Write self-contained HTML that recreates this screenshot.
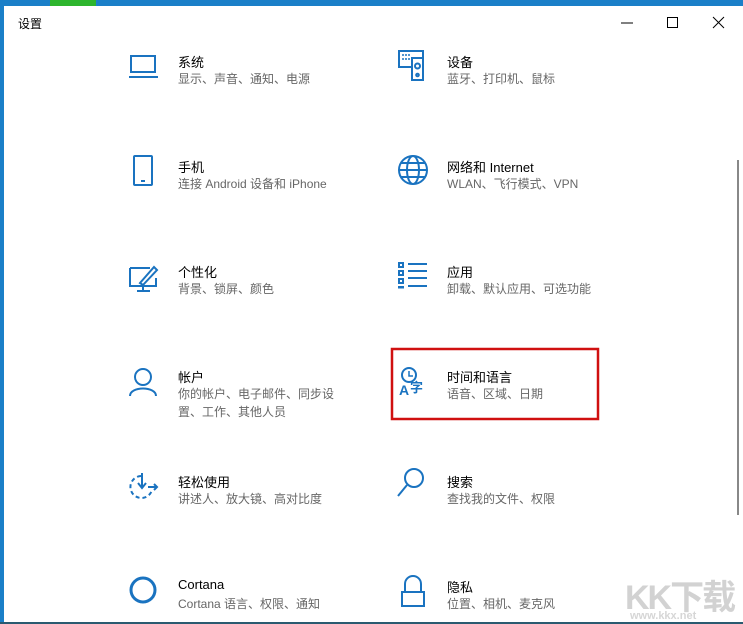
<!DOCTYPE html>
<html><head><meta charset="utf-8"><style>
body{margin:0;width:743px;height:624px;overflow:hidden;background:#1a7fc8;position:relative;font-family:"Liberation Sans","Noto Sans CJK SC",sans-serif}
.win{position:absolute;left:4px;top:6px;width:739px;height:616px;background:#fff}
.bot{position:absolute;left:0;top:622px;width:743px;height:2px;background:#2a5a70}
.t{position:absolute;font-size:13px;color:#000;white-space:nowrap}
.s{position:absolute;font-size:12px;color:#666;white-space:nowrap;line-height:18px}
svg{position:absolute}
.ic{fill:none;stroke:#1a73c0;stroke-width:2}
</style></head><body>
<div style="position:absolute;left:50px;top:0;width:46px;height:6px;background:#2db52d"></div>
<div class="win"></div>
<div class="bot"></div>
<div class="t" style="left:18px;top:15px;font-size:12px">设置</div>
<svg width="743" height="40" style="left:0;top:0">
<line x1="621" y1="23" x2="633" y2="23" stroke="#000" stroke-width="1"/>
<rect x="667.5" y="17.5" width="10" height="10" fill="none" stroke="#000"/>
<path d="M713 17L724 28M724 17L713 28" stroke="#000" stroke-width="1"/>
</svg>
<div style="position:absolute;left:737px;top:160px;width:2px;height:355px;background:#888"></div>

<svg width="743" height="624" style="left:0;top:0">
<g class="ic">
<rect x="131" y="56" width="24" height="16"/><path d="M129 77H158"/>
<rect x="399" y="51" width="24" height="16"/><rect x="412" y="58" width="11" height="22" fill="#fff"/><circle cx="417.5" cy="66" r="2.5"/><circle cx="417.5" cy="75" r="1.3"/>
<path d="M402 55h2M405 55h2M408 55h2M402 59h2M405 59h2M408 59h2" stroke-width="1.5"/>
<rect x="134" y="156" width="18" height="29" rx="1"/><path d="M141 181h4"/>
<circle cx="413" cy="170" r="14"/><ellipse cx="413" cy="170" rx="6" ry="14"/><path d="M399 170H427M401 163H425M401 177H425"/>
<path d="M130 268H150M130 268V286H156V278"/><path d="M143 290V286M137 291H150"/><path d="M140 283L154 267L157 270L143 285Z"/>
<rect x="399" y="263" width="4" height="4"/><rect x="399" y="271" width="4" height="4"/><rect x="399" y="279" width="4" height="4"/><rect x="399" y="287" width="4" height="0.5"/>
<path d="M408 264H427M408 271H427M408 278H427M408 286H427"/>
<circle cx="143" cy="377" r="8"/><path d="M130 396C130 386 156 386 156 396"/>
<path d="M141 476A11 11 0 1 0 152 490" stroke-dasharray="4 3"/><path d="M142 473V487M138 483L142 488L146 483M148 487H157M154 484L157 487L154 490"/>
<circle cx="414" cy="478" r="9"/><path d="M407 485L398 496"/>
<circle cx="143" cy="590" r="12" stroke-width="3"/>
<path d="M405 592V584A8 8 0 0 1 421 584V592"/><rect x="402" y="592" width="22" height="14"/>
</g>
<circle cx="409" cy="375" r="7" fill="none" stroke="#1a73c0" stroke-width="2"/><path d="M409 371V376H413" fill="none" stroke="#1a73c0" stroke-width="1.5"/>
<text x="399" y="395" font-size="14" font-weight="bold" fill="#1a73c0" font-family="Liberation Sans">A</text>
<text x="410" y="392" font-size="13" font-weight="bold" fill="#1a73c0" font-family="Noto Sans CJK SC">字</text>
<rect x="392" y="349" width="206" height="70" fill="none" stroke="#d01010" stroke-width="2.5"/>
</svg>

<div class="t" style="left:178px;top:52px">系统</div><div class="s" style="left:178px;top:70px">显示、声音、通知、电源</div>
<div class="t" style="left:447px;top:52px">设备</div><div class="s" style="left:447px;top:70px">蓝牙、打印机、鼠标</div>
<div class="t" style="left:178px;top:157px">手机</div><div class="s" style="left:178px;top:175px">连接 Android 设备和 iPhone</div>
<div class="t" style="left:447px;top:157px">网络和 Internet</div><div class="s" style="left:447px;top:175px">WLAN、飞行模式、VPN</div>
<div class="t" style="left:178px;top:262px">个性化</div><div class="s" style="left:178px;top:280px">背景、锁屏、颜色</div>
<div class="t" style="left:447px;top:262px">应用</div><div class="s" style="left:447px;top:280px">卸载、默认应用、可选功能</div>
<div class="t" style="left:178px;top:367px">帐户</div><div class="s" style="left:178px;top:385px">你的帐户、电子邮件、同步设<br>置、工作、其他人员</div>
<div class="t" style="left:447px;top:367px">时间和语言</div><div class="s" style="left:447px;top:385px">语音、区域、日期</div>
<div class="t" style="left:178px;top:472px">轻松使用</div><div class="s" style="left:178px;top:490px">讲述人、放大镜、高对比度</div>
<div class="t" style="left:447px;top:472px">搜索</div><div class="s" style="left:447px;top:490px">查找我的文件、权限</div>
<div class="t" style="left:178px;top:577px">Cortana</div><div class="s" style="left:178px;top:595px">Cortana 语言、权限、通知</div>
<div class="t" style="left:447px;top:577px">隐私</div><div class="s" style="left:447px;top:595px">位置、相机、麦克风</div>

<div style="position:absolute;left:625px;top:570px;font-size:34px;font-weight:bold;color:#d2d2d2;letter-spacing:-2px">KK下载</div>
<div style="position:absolute;left:630px;top:610px;font-size:11px;font-weight:bold;color:#d6d6d6">www.kkx.net</div>
</body></html>
